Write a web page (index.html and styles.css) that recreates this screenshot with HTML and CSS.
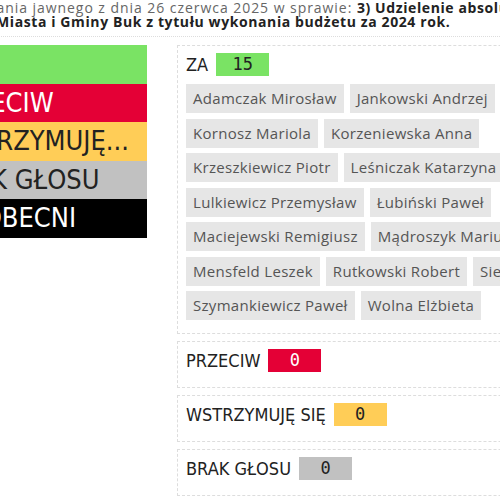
FILE: index.html
```html
<!DOCTYPE html>
<html lang="pl">
<head>
    <meta charset="UTF-8">
    <title>Wyniki głosowania</title>
    <link rel="stylesheet" href="styles.css">
</head>
<body>
    <div class="page">
        <div class="title">
            <div class="title-line first">Wyniki głosowania jawnego z dnia 26 czerwca 2025 w sprawie: <strong>3) Udzielenie absolutorium Burmistrzowi</strong></div>
            <div class="title-line"><strong>Miasta i Gminy Buk z tytułu wykonania budżetu za 2024 rok.</strong></div>
        </div>

        <div class="results">
            <div class="legend">
                <div class="legend-bar bar-za">ZA</div>
                <div class="legend-bar bar-przeciw">PRZECIW</div>
                <div class="legend-bar bar-wstrzymuje">WSTRZYMUJĘ...</div>
                <div class="legend-bar bar-brak">BRAK GŁOSU</div>
                <div class="legend-bar bar-nieobecni">NIEOBECNI</div>
            </div>

            <div class="votes">
                <div class="vote-box">
                    <div class="vote-head">
                        <span class="vote-label">ZA</span>
                        <span class="vote-count count-za">15</span>
                    </div>
                    <div class="names">
                        <span class="name">Adamczak Mirosław</span>
                        <span class="name">Jankowski Andrzej</span>
                        <span class="name">Kornosz Mariola</span>
                        <span class="name">Korzeniewska Anna</span>
                        <span class="name">Krzeszkiewicz Piotr</span>
                        <span class="name">Leśniczak Katarzyna</span>
                        <span class="name">Lulkiewicz Przemysław</span>
                        <span class="name">Łubiński Paweł</span>
                        <span class="name">Maciejewski Remigiusz</span>
                        <span class="name">Mądroszyk Mariusz</span>
                        <span class="name">Mensfeld Leszek</span>
                        <span class="name">Rutkowski Robert</span>
                        <span class="name">Siejak Jan</span>
                        <span class="name">Szymankiewicz Paweł</span>
                        <span class="name">Wolna Elżbieta</span>
                    </div>
                </div>

                <div class="vote-box">
                    <div class="vote-head">
                        <span class="vote-label">PRZECIW</span>
                        <span class="vote-count count-przeciw">0</span>
                    </div>
                </div>

                <div class="vote-box">
                    <div class="vote-head">
                        <span class="vote-label">WSTRZYMUJĘ SIĘ</span>
                        <span class="vote-count count-wstrzymuje">0</span>
                    </div>
                </div>

                <div class="vote-box">
                    <div class="vote-head">
                        <span class="vote-label">BRAK GŁOSU</span>
                        <span class="vote-count count-brak">0</span>
                    </div>
                </div>
            </div>
        </div>
    </div>
</body>
</html>
```

FILE: styles.css
```css
html {
    overflow: hidden;
}
body {
    margin: 0;
    padding: 0;
    background: #fff;
    font-family: 'Open Sans', sans-serif;
    color: #555;
}
.page {
    width: 760px;
    margin-left: -60px;
}
.title {
    padding: 1px 0 7px 56px;
    font-size: 14px;
    line-height: 14px;
    letter-spacing: 0.95px;
    white-space: nowrap;
    color: #666;
    border-bottom: 1px dotted #ddd;
}
.title-line.first {
    margin-left: -104px;
}
.title strong {
    color: #222;
    letter-spacing: 0.6px;
}
.results {
    display: flex;
    gap: 30px;
    margin-top: 8px;
}
.legend {
    width: 207px;
    flex-shrink: 0;
}
.legend-bar {
    height: 38.6px;
    line-height: 38.6px;
    padding-left: 2px;
    font-family: 'DejaVu Sans', sans-serif;
    font-stretch: condensed;
    font-size: 27px;
    white-space: nowrap;
    overflow: hidden;
}
.bar-za { background: #7ae364; color: #222; }
.bar-przeciw { background: #e40036; color: #fff; }
.bar-wstrzymuje { background: #ffcd57; color: #222; }
.bar-brak { background: #c1c1c1; color: #222; }
.bar-nieobecni { background: #000; color: #fff; }

.votes {
    width: 420px;
    display: flex;
    flex-direction: column;
    gap: 7px;
}
.vote-box {
    border: 1px dashed #ddd;
    padding: 7px 8px 15px;
}
.vote-head {
    display: flex;
    align-items: center;
    gap: 8px;
    height: 23px;
}
.vote-label {
    font-family: 'DejaVu Sans', sans-serif;
    font-stretch: condensed;
    font-size: 18px;
    color: #222;
}
.vote-count {
    width: 53px;
    height: 23px;
    line-height: 23px;
    text-align: center;
    font-family: 'DejaVu Sans Mono', monospace;
    font-size: 17px;
    color: #222;
}
.count-za { background: #7ae364; }
.count-przeciw { background: #e40036; color: #fff; }
.count-wstrzymuje { background: #ffcd57; }
.count-brak { background: #c1c1c1; }

.names {
    display: flex;
    flex-wrap: wrap;
    gap: 5.5px 6px;
    margin-top: 8px;
    margin-bottom: -2px;
}
.name {
    background: #e6e6e6;
    padding: 5px 7px;
    font-size: 15px;
    line-height: 19px;
    letter-spacing: 0.3px;
    color: #555;
    white-space: nowrap;
}
```
